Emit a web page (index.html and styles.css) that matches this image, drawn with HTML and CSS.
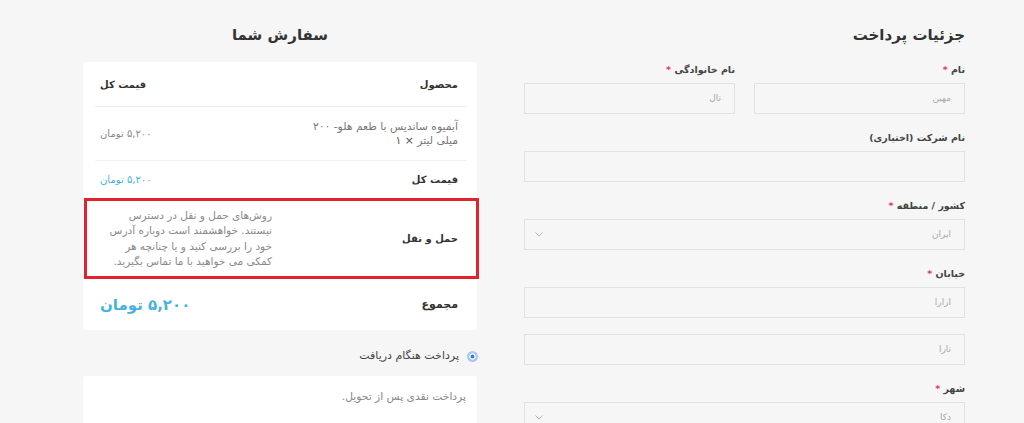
FILE: index.html
```html
<!DOCTYPE html>
<html lang="fa" dir="rtl">
<head>
<meta charset="utf-8">
<title>تسویه حساب</title>
<link rel="stylesheet" href="styles.css">
</head>
<body>
<div class="page">
  <section class="billing">
    <h2 class="title">جزئیات پرداخت</h2>
    <div class="row2">
      <div class="field">
        <label class="label">نام <span class="req">*</span></label>
        <div class="input">مهین</div>
      </div>
      <div class="field">
        <label class="label">نام خانوادگی <span class="req">*</span></label>
        <div class="input">تال</div>
      </div>
    </div>
    <div class="field">
      <label class="label">نام شرکت (اختیاری)</label>
      <div class="input"></div>
    </div>
    <div class="field">
      <label class="label">کشور / منطقه <span class="req">*</span></label>
      <div class="input select"><span>ایران</span>
        <svg class="chev" width="8" height="5" viewBox="0 0 8 5"><polyline points="0.5,0.5 4,4 7.5,0.5" fill="none" stroke="#b5b5b5" stroke-width="1"/></svg>
      </div>
    </div>
    <div class="field">
      <label class="label">خیابان <span class="req">*</span></label>
      <div class="input">ارارا</div>
    </div>
    <div class="field">
      <div class="input">تارا</div>
    </div>
    <div class="field">
      <label class="label">شهر <span class="req">*</span></label>
      <div class="input select"><span>دکا</span>
        <svg class="chev" width="8" height="5" viewBox="0 0 8 5"><polyline points="0.5,0.5 4,4 7.5,0.5" fill="none" stroke="#b5b5b5" stroke-width="1"/></svg>
      </div>
    </div>
  </section>

  <section class="order">
    <h2 class="title center">سفارش شما</h2>
    <div class="card">
      <div class="trow head">
        <div class="cell-name">محصول</div>
        <div class="cell-price">قیمت کل</div>
      </div>
      <div class="trow item">
        <div class="cell-name prod">آبمیوه ساندیس با طعم هلو- ۲۰۰<br>میلی لیتر <span class="qty">× ۱</span></div>
        <div class="cell-price muted">۵,۲۰۰ تومان</div>
      </div>
      <div class="trow sub">
        <div class="cell-name">قیمت کل</div>
        <div class="cell-price blue">۵,۲۰۰ تومان</div>
      </div>
      <div class="trow ship">
        <div class="cell-name">حمل و نقل</div>
        <div class="ship-text">روش‌های حمل و نقل در دسترس نیستند. خواهشمند است دوباره آدرس خود را بررسی کنید و یا چنانچه هر کمکی می خواهید با ما تماس بگیرید.</div>
      </div>
      <div class="trow total">
        <div class="cell-name">مجموع</div>
        <div class="cell-price big">۵,۲۰۰ تومان</div>
      </div>
    </div>
    <div class="pay">
      <span class="radio"></span>
      <span class="pay-label">پرداخت هنگام دریافت</span>
    </div>
    <div class="pay-box">پرداخت نقدی پس از تحویل.</div>
  </section>
</div>
</body>
</html>
```
FILE: styles.css
```css
html, body {
  margin: 0;
  padding: 0;
  background: #f6f6f6;
}
body {
  font-family: "DejaVu Sans", sans-serif;
  color: #333;
}
.page {
  display: flex;
  direction: rtl;
  gap: 47px;
  padding: 24px 59px 0 83px;
  height: 423px;
  box-sizing: border-box;
  overflow: hidden;
}
.billing {
  width: 441px;
  flex: none;
}
.order {
  width: 394px;
  flex: none;
}
.title {
  margin: 0 0 16px;
  font-size: 15px;
  line-height: 22px;
  font-weight: bold;
  color: #333;
}
.center { text-align: center; }
.row2 {
  display: flex;
  gap: 19px;
}
.row2 .field { flex: 1; }
.field {
  margin-bottom: 16px;
}
.label {
  display: block;
  font-size: 9.5px;
  line-height: 16px;
  font-weight: bold;
  color: #444;
  margin-bottom: 5px;
}
.req {
  color: #e2336b;
}
.input {
  box-sizing: border-box;
  height: 31px;
  border: 1px solid #e1e1e1;
  background: #f6f6f6;
  padding: 0 13px;
  font-size: 9px;
  line-height: 29px;
  color: #a8a8a8;
}
.select {
  display: flex;
  justify-content: space-between;
  align-items: center;
  padding-left: 10px;
}
.card {
  background: #fff;
  border-radius: 3px;
  padding: 0 10px 0 12px;
}
.trow {
  display: flex;
  justify-content: space-between;
  align-items: center;
  padding: 0 9px 0 5px;
  font-size: 10px;
  font-weight: bold;
  color: #333;
}
.head {
  height: 44px;
  border-bottom: 1px solid #ececec;
}
.item {
  height: 53px;
  border-bottom: 1px solid #f1f1f1;
}
.sub {
  height: 37px;
}
.prod {
  font-weight: normal;
  color: #777;
  font-size: 10.8px;
  line-height: 14px;
  width: 160px;
}
.qty {
  color: #555;
}
.muted {
  font-weight: normal;
  color: #888;
  font-size: 10px;
}
.blue {
  font-weight: normal;
  color: #3fb1e0;
  font-size: 10px;
}
.ship {
  height: 81px;
  box-sizing: border-box;
  border: 3px solid #e2232b;
  margin: 0 -12px 0 -11px;
  padding: 0 18px 0 13px;
}
.ship-text {
  width: 172px;
  font-size: 10.5px;
  line-height: 15.5px;
  font-weight: normal;
  color: #8a8a8a;
}
.total {
  height: 51px;
  font-size: 11px;
}
.big {
  color: #45b3e0;
  font-size: 15px;
  font-weight: bold;
}
.pay {
  display: flex;
  align-items: center;
  gap: 8px;
  padding: 19px 0 0 0;
  height: 14px;
  font-size: 11px;
  color: #444;
}
.radio {
  box-sizing: border-box;
  width: 11px;
  height: 11px;
  border-radius: 50%;
  background: #2f7de1;
  border: 2px solid #a9c9f2;
  box-shadow: inset 0 0 0 1.5px #fff;
  flex: none;
  margin-right: -1px;
}
.pay-label {
  line-height: 14px;
}
.pay-box {
  margin-top: 13px;
  background: #fff;
  border-radius: 3px;
  height: 60px;
  padding: 14px 11px 0 0;
  box-sizing: border-box;
  font-size: 10.7px;
  color: #888;
}
```
